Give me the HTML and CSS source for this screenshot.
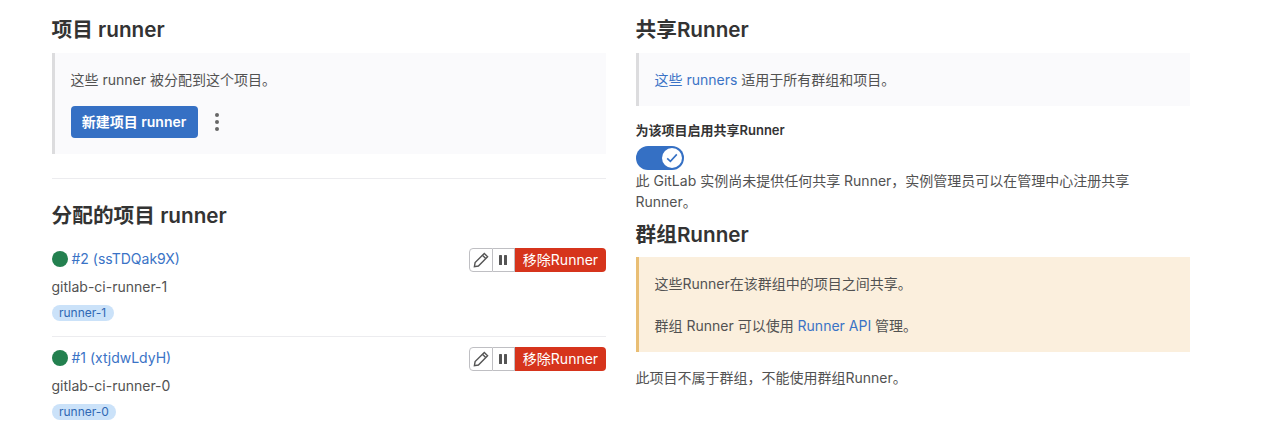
FILE: index.html
```html
<!DOCTYPE html>
<html lang="zh">
<head>
<meta charset="utf-8">
<title>Runners</title>
<link rel="stylesheet" href="styles.css">
</head>
<body>
<main class="page">
  <section class="col">
    <h2 class="title">项目 runner</h2>
    <div class="alert alert-project">
      <p class="alert-text">这些 runner 被分配到这个项目。</p>
      <div class="actions">
        <a class="btn-primary">新建项目 runner</a>
        <svg class="kebab" width="16" height="20" viewBox="0 0 16 20"><circle cx="8" cy="3" r="2"/><circle cx="8" cy="10" r="2"/><circle cx="8" cy="17" r="2"/></svg>
      </div>
    </div>
    <hr class="rule">
    <h2 class="title title-assigned">分配的项目 runner</h2>
    <div class="runner">
      <div class="runner-main">
        <div class="runner-head"><span class="dot"></span><a class="link">#2 (ssTDQak9X)</a></div>
        <div class="runner-name">gitlab-ci-runner-1</div>
        <span class="tag">runner-1</span>
      </div>
      <div class="btn-group">
        <span class="btn-icon"><svg width="16" height="16" viewBox="0 0 16 16" fill="none" stroke="#555" stroke-width="1.4"><path d="M11.3 1.4 14.6 4.7 5.4 14 1.4 14.7 2.1 10.6Z"/><path d="M9.4 3.3 12.7 6.6"/></svg></span>
        <span class="btn-icon btn-pause"><svg width="16" height="16" viewBox="0 0 16 16" fill="#555"><rect x="4" y="3" width="3" height="10" rx=".6"/><rect x="9" y="3" width="3" height="10" rx=".6"/></svg></span>
        <span class="btn-danger">移除Runner</span>
      </div>
    </div>
    <div class="runner runner-next">
      <div class="runner-main">
        <div class="runner-head"><span class="dot"></span><a class="link">#1 (xtjdwLdyH)</a></div>
        <div class="runner-name">gitlab-ci-runner-0</div>
        <span class="tag">runner-0</span>
      </div>
      <div class="btn-group">
        <span class="btn-icon"><svg width="16" height="16" viewBox="0 0 16 16" fill="none" stroke="#555" stroke-width="1.4"><path d="M11.3 1.4 14.6 4.7 5.4 14 1.4 14.7 2.1 10.6Z"/><path d="M9.4 3.3 12.7 6.6"/></svg></span>
        <span class="btn-icon btn-pause"><svg width="16" height="16" viewBox="0 0 16 16" fill="#555"><rect x="4" y="3" width="3" height="10" rx=".6"/><rect x="9" y="3" width="3" height="10" rx=".6"/></svg></span>
        <span class="btn-danger">移除Runner</span>
      </div>
    </div>
  </section>
  <section class="col">
    <h2 class="title">共享Runner</h2>
    <div class="alert alert-shared">
      <p class="alert-text"><a class="link">这些 runners</a> 适用于所有群组和项目。</p>
    </div>
    <div class="toggle-label">为该项目启用共享Runner</div>
    <div class="toggle"><span class="knob"><svg width="14" height="14" viewBox="0 0 14 14" fill="none" stroke="#3570c4" stroke-width="1.6"><path d="M2.2 7.4 5.4 10.4 11.8 3.4"/></svg></span></div>
    <p class="note">此 GitLab 实例尚未提供任何共享 Runner，实例管理员可以在管理中心注册共享 Runner。</p>
    <h2 class="title title-group">群组Runner</h2>
    <div class="alert alert-warn">
      <p class="alert-text">这些Runner在该群组中的项目之间共享。</p>
      <p class="alert-text alert-second">群组 Runner 可以使用 <a class="link">Runner API</a> 管理。</p>
    </div>
    <p class="foot">此项目不属于群组，不能使用群组Runner。</p>
  </section>
</main>
</body>
</html>
```
FILE: styles.css
```css
* { box-sizing: border-box; }
html, body { margin: 0; padding: 0; background: #fff; overflow: hidden; }
body {
  font-family: Inter, "Noto Sans CJK SC", sans-serif;
  font-size: 14px;
  line-height: 20px;
  color: #333238;
}
p { margin: 0; }
.page { display: flex; gap: 30px; padding: 0 98px 0 52px; }
.col { flex: 1 1 0; min-width: 0; }
.title { margin: 0 0 0 -0.5px; font-size: 20.7px; line-height: 26px; font-weight: 600; color: #333; padding-top: 17px; }
.alert { background: #fafafc; border-left: 3px solid #dcdcde; padding: 17px 16px 16px 15.5px; margin-top: 10px; }
.alert-text { font-size: 14px; line-height: 20px; color: #525252; }
.alert-project { height: 101px; }
.alert-shared { height: 53px; }
.actions { display: flex; align-items: center; margin-top: 16px; }
.btn-primary { display: block; width: 127px; height: 32px; line-height: 32px; text-align: center; background: #3570c4; border-radius: 4px; color: #fff; font-weight: 600; font-size: 14px; }
.kebab { fill: #666; margin-left: 11px; }
.rule { border: 0; border-top: 1px solid #ececef; margin: 24px 0 0; }
.title-assigned { padding-top: 24px; }
.runner { display: flex; justify-content: space-between; margin-top: 17px; height: 90px; }
.runner-next { border-top: 1px solid #ececef; margin-top: 0; height: 96px; padding-top: 8px; }
.runner-main { margin-left: -0.5px; }
.runner-head { display: flex; align-items: center; height: 20px; margin-top: 3px; }
.dot { width: 16px; height: 16px; border-radius: 50%; background: #23804f; margin-right: 4px; }
.link { color: #3a73c6; }
.runner-name { margin-top: 8px; color: #525252; }
.tag { display: inline-block; margin-top: 8px; background: #cbe2f9; color: #2f68b4; border-radius: 10px; font-size: 12px; line-height: 16px; padding: 0 7.5px; }
.btn-group { display: flex; height: 24px; margin-top: 2px; }
.btn-icon { display: flex; align-items: center; justify-content: center; width: 24px; height: 24px; border: 1px solid #bfbfc3; border-radius: 4px 0 0 4px; }
.btn-pause { border-left: 0; border-radius: 0; width: 22.5px; }
.btn-danger { width: 91px; height: 24px; background: #d6341c; color: #fff; border-radius: 0 4px 4px 0; text-align: center; line-height: 24px; font-size: 14px; }
.toggle-label { margin: 14px 0 0 -0.5px; font-weight: 600; font-size: 13px; line-height: 20px; color: #333; }
.toggle { display: flex; justify-content: flex-end; align-items: center; width: 48px; height: 24px; background: #3570c4; border-radius: 12px; padding-right: 2px; margin-top: 6px; }
.knob { display: flex; align-items: center; justify-content: center; width: 20px; height: 20px; border-radius: 50%; background: #fff; }
.note { width: 510px; line-height: 21px; color: #525252; margin-left: -0.5px; }
.title-group { padding-top: 10px; }
.alert-warn { background: #fbefdd; border-left-color: #e9be74; height: 95px; margin-top: 9px; }
.alert-second { margin-top: 22px; }
.foot { margin: 16px 0 0 -0.5px; color: #525252; }
```
